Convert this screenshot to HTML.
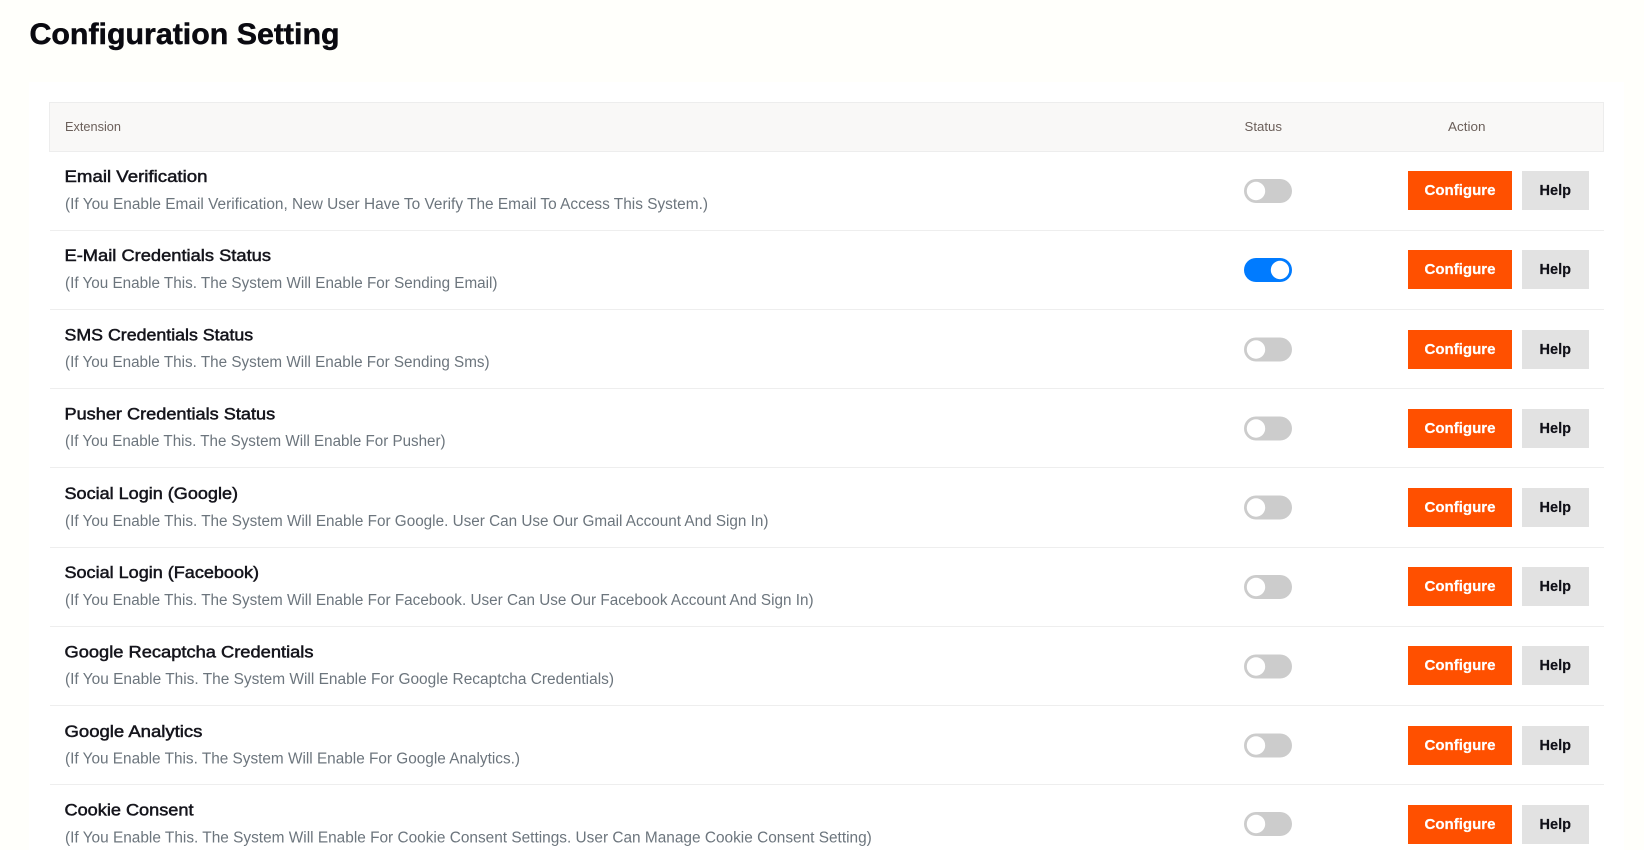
<!DOCTYPE html>
<html lang="en"><head><meta charset="utf-8"><title>Configuration Setting</title>
<style>
html,body{margin:0;padding:0;width:1644px;height:850px;overflow:hidden;background:#fffffb}
svg{display:block;position:absolute;left:0;top:0}
text{font-family:"Liberation Sans",sans-serif}
.h{font-size:12.5px;fill:#6b5f5a}
.t{font-size:16.5px;fill:#15151c;stroke:#15151c;stroke-width:.5}
.s{font-size:15.5px;fill:#6c757d}
.c{font-size:15px;font-weight:bold;fill:#fff;stroke:#fff;stroke-width:.25}
.p{font-size:15px;font-weight:bold;fill:#101018;stroke:#101018;stroke-width:.15}
</style></head><body>
<svg width="1644" height="850" viewBox="0 0 1644 850" xmlns="http://www.w3.org/2000/svg">
<rect width="1644" height="850" fill="#fffffb"/>
<rect x="29" y="82" width="1595" height="768" fill="#fff"/>
<text x="29.5" y="44" font-size="30" font-weight="bold" fill="#0a0a10" stroke="#0a0a10" stroke-width=".5" textLength="310" lengthAdjust="spacingAndGlyphs">Configuration Setting</text>
<rect x="49.5" y="102.5" width="1554" height="49" fill="#f9f8f7" stroke="#ededed"/>
<text class="h" x="65" y="131" textLength="56" lengthAdjust="spacingAndGlyphs">Extension</text>
<text class="h" x="1244.5" y="131" textLength="37.5" lengthAdjust="spacingAndGlyphs">Status</text>
<text class="h" x="1448" y="131" textLength="37.5" lengthAdjust="spacingAndGlyphs">Action</text>

<g fill="#eeeeee">
<rect x="50" y="230" width="1554" height="1"/><rect x="50" y="309" width="1554" height="1"/><rect x="50" y="388" width="1554" height="1"/><rect x="50" y="467" width="1554" height="1"/><rect x="50" y="547" width="1554" height="1"/><rect x="50" y="626" width="1554" height="1"/><rect x="50" y="705" width="1554" height="1"/><rect x="50" y="784" width="1554" height="1"/>
</g>

<text class="t" x="64.5" y="182" textLength="143" lengthAdjust="spacingAndGlyphs">Email Verification</text>
<text class="s" x="65" y="209" textLength="643" lengthAdjust="spacingAndGlyphs">(If You Enable Email Verification, New User Have To Verify The Email To Access This System.)</text>
<text class="t" x="64.5" y="261" textLength="206.5" lengthAdjust="spacingAndGlyphs">E-Mail Credentials Status</text>
<text class="s" x="65" y="288" textLength="432.5" lengthAdjust="spacingAndGlyphs">(If You Enable This. The System Will Enable For Sending Email)</text>
<text class="t" x="64.5" y="340.5" textLength="188.7" lengthAdjust="spacingAndGlyphs">SMS Credentials Status</text>
<text class="s" x="65" y="367" textLength="424.6" lengthAdjust="spacingAndGlyphs">(If You Enable This. The System Will Enable For Sending Sms)</text>
<text class="t" x="64.5" y="419.5" textLength="210.7" lengthAdjust="spacingAndGlyphs">Pusher Credentials Status</text>
<text class="s" x="65" y="446" textLength="380.6" lengthAdjust="spacingAndGlyphs">(If You Enable This. The System Will Enable For Pusher)</text>
<text class="t" x="64.5" y="499" textLength="173.5" lengthAdjust="spacingAndGlyphs">Social Login (Google)</text>
<text class="s" x="65" y="526" textLength="703.5" lengthAdjust="spacingAndGlyphs">(If You Enable This. The System Will Enable For Google. User Can Use Our Gmail Account And Sign In)</text>
<text class="t" x="64.5" y="578" textLength="194.5" lengthAdjust="spacingAndGlyphs">Social Login (Facebook)</text>
<text class="s" x="65" y="605" textLength="748.6" lengthAdjust="spacingAndGlyphs">(If You Enable This. The System Will Enable For Facebook. User Can Use Our Facebook Account And Sign In)</text>
<text class="t" x="64.5" y="657.5" textLength="249" lengthAdjust="spacingAndGlyphs">Google Recaptcha Credentials</text>
<text class="s" x="65" y="684" textLength="549" lengthAdjust="spacingAndGlyphs">(If You Enable This. The System Will Enable For Google Recaptcha Credentials)</text>
<text class="t" x="64.5" y="737" textLength="137.9" lengthAdjust="spacingAndGlyphs">Google Analytics</text>
<text class="s" x="65" y="763.5" textLength="455" lengthAdjust="spacingAndGlyphs">(If You Enable This. The System Will Enable For Google Analytics.)</text>
<text class="t" x="64.5" y="815.5" textLength="129" lengthAdjust="spacingAndGlyphs">Cookie Consent</text>
<text class="s" x="65" y="842.5" textLength="806.8" lengthAdjust="spacingAndGlyphs">(If You Enable This. The System Will Enable For Cookie Consent Settings. User Can Manage Cookie Consent Setting)</text>

<!-- toggles -->
<g fill="#cccccc">
<rect x="1244" y="179" width="48" height="24" rx="12"/>
<rect x="1244" y="337.5" width="48" height="24" rx="12"/>
<rect x="1244" y="416.5" width="48" height="24" rx="12"/>
<rect x="1244" y="495.5" width="48" height="24" rx="12"/>
<rect x="1244" y="575" width="48" height="24" rx="12"/>
<rect x="1244" y="654.5" width="48" height="24" rx="12"/>
<rect x="1244" y="733.5" width="48" height="24" rx="12"/>
<rect x="1244" y="812" width="48" height="24" rx="12"/>
</g>
<rect x="1244" y="258" width="48" height="24" rx="12" fill="#007bff"/>
<g fill="#fff">
<circle cx="1256" cy="191" r="9.2"/><circle cx="1280" cy="270" r="9.2"/><circle cx="1256" cy="349.5" r="9.2"/><circle cx="1256" cy="428.5" r="9.2"/><circle cx="1256" cy="507.5" r="9.2"/><circle cx="1256" cy="587" r="9.2"/><circle cx="1256" cy="666.5" r="9.2"/><circle cx="1256" cy="745.5" r="9.2"/><circle cx="1256" cy="824" r="9.2"/>
</g>

<!-- buttons -->
<g fill="#ff5000">
<rect x="1408" y="171" width="104" height="39"/><rect x="1408" y="250" width="104" height="39"/><rect x="1408" y="330" width="104" height="39"/><rect x="1408" y="409" width="104" height="39"/><rect x="1408" y="488" width="104" height="39"/><rect x="1408" y="567" width="104" height="39"/><rect x="1408" y="646" width="104" height="39"/><rect x="1408" y="726" width="104" height="39"/><rect x="1408" y="805" width="104" height="39"/>
</g>
<g fill="#e2e2e2">
<rect x="1522" y="171" width="67" height="39"/><rect x="1522" y="250" width="67" height="39"/><rect x="1522" y="330" width="67" height="39"/><rect x="1522" y="409" width="67" height="39"/><rect x="1522" y="488" width="67" height="39"/><rect x="1522" y="567" width="67" height="39"/><rect x="1522" y="646" width="67" height="39"/><rect x="1522" y="726" width="67" height="39"/><rect x="1522" y="805" width="67" height="39"/>
</g>
<text class="c" x="1424.5" y="195" textLength="71" lengthAdjust="spacingAndGlyphs">Configure</text><text class="p" x="1539.5" y="195" textLength="31.5" lengthAdjust="spacingAndGlyphs">Help</text>
<text class="c" x="1424.5" y="274" textLength="71" lengthAdjust="spacingAndGlyphs">Configure</text><text class="p" x="1539.5" y="274" textLength="31.5" lengthAdjust="spacingAndGlyphs">Help</text>
<text class="c" x="1424.5" y="354" textLength="71" lengthAdjust="spacingAndGlyphs">Configure</text><text class="p" x="1539.5" y="354" textLength="31.5" lengthAdjust="spacingAndGlyphs">Help</text>
<text class="c" x="1424.5" y="433" textLength="71" lengthAdjust="spacingAndGlyphs">Configure</text><text class="p" x="1539.5" y="433" textLength="31.5" lengthAdjust="spacingAndGlyphs">Help</text>
<text class="c" x="1424.5" y="512" textLength="71" lengthAdjust="spacingAndGlyphs">Configure</text><text class="p" x="1539.5" y="512" textLength="31.5" lengthAdjust="spacingAndGlyphs">Help</text>
<text class="c" x="1424.5" y="591" textLength="71" lengthAdjust="spacingAndGlyphs">Configure</text><text class="p" x="1539.5" y="591" textLength="31.5" lengthAdjust="spacingAndGlyphs">Help</text>
<text class="c" x="1424.5" y="670" textLength="71" lengthAdjust="spacingAndGlyphs">Configure</text><text class="p" x="1539.5" y="670" textLength="31.5" lengthAdjust="spacingAndGlyphs">Help</text>
<text class="c" x="1424.5" y="750" textLength="71" lengthAdjust="spacingAndGlyphs">Configure</text><text class="p" x="1539.5" y="750" textLength="31.5" lengthAdjust="spacingAndGlyphs">Help</text>
<text class="c" x="1424.5" y="829" textLength="71" lengthAdjust="spacingAndGlyphs">Configure</text><text class="p" x="1539.5" y="829" textLength="31.5" lengthAdjust="spacingAndGlyphs">Help</text>
</svg>
</body></html>
